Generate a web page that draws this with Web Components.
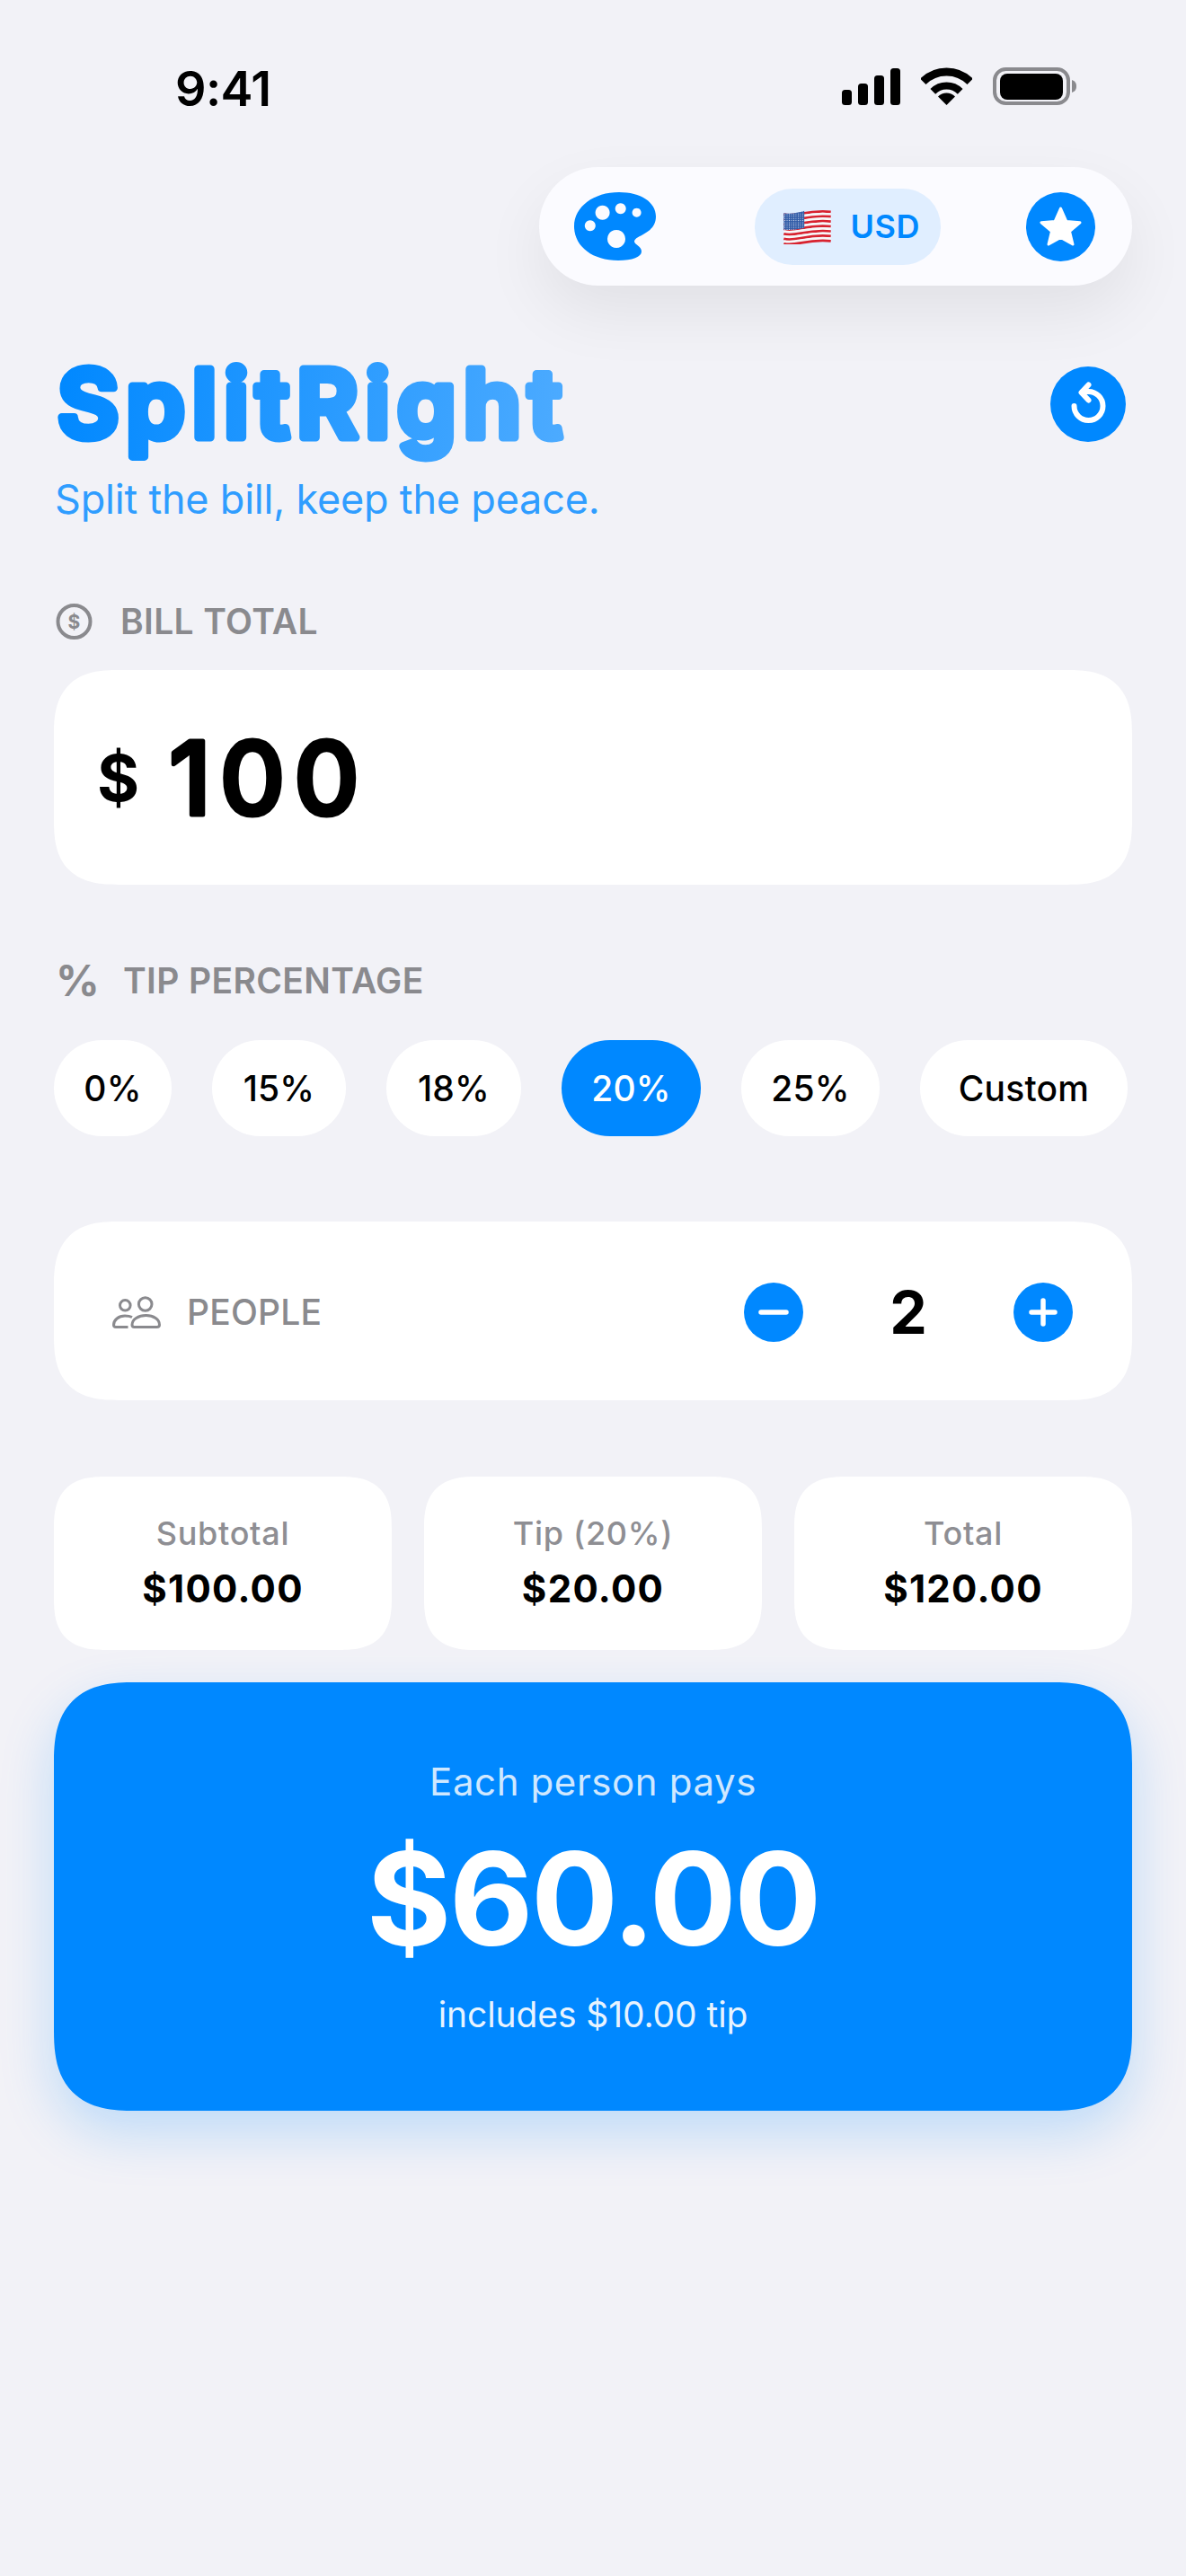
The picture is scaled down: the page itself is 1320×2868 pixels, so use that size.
<!DOCTYPE html>
<html lang="en">
<head>
<meta charset="utf-8">
<title>SplitRight</title>
<style>
    html, body { margin: 0; background: #f2f2f7; }
    body { font-family: Inter, "Liberation Sans", sans-serif; }
</style>
</head>
<body>
<split-app></split-app>
<script>
// small helper so each element only has to declare its html
function shadow(el, html) {
    el.attachShadow({ mode: 'open' });
    el.shadowRoot.innerHTML = html;
}

class StatusBar extends HTMLElement {
    connectedCallback() {
        shadow(this, `
            <style>
                :host { display: flex; justify-content: space-between; align-items: flex-start; box-sizing: border-box; height: 186px; padding: 75px 122px 0 195px; color: #000; }
                .row { display: flex; align-items: center; }
                .time { font: 600 54px/54px Inter, sans-serif; letter-spacing: -0.6px; margin-top: -3px; }
                svg { display: block; }
                .wifi { margin-left: 23px; }
                .batt { margin-left: 23px; }
            </style>
            <div class="time">9:41</div>
            <div class="row">
                <svg width="65" height="41" viewBox="0 0 65 41">
                    <rect x="0" y="24" width="11" height="17" rx="3.5"/>
                    <rect x="18" y="17" width="11" height="24" rx="3.5"/>
                    <rect x="36" y="8" width="11" height="33" rx="3.5"/>
                    <rect x="54" y="0" width="11" height="41" rx="3.5"/>
                </svg>
                <svg class="wifi" width="57" height="42" viewBox="0 0 57 42" fill="none" stroke="#000">
                    <path d="M2.3 15.8A37 37 0 0 1 54.7 15.8" stroke-width="9"/>
                    <path d="M13.3 26.8A21.5 21.5 0 0 1 43.7 26.8" stroke-width="8"/>
                    <path d="M28.5 42L19 32.5A13.5 13.5 0 0 1 38 32.5Z" fill="#000" stroke="none"/>
                </svg>
                <svg class="batt" width="93" height="42" viewBox="0 0 93 42">
                    <rect x="2" y="2" width="82" height="38" rx="12.5" fill="none" stroke="#8a8a8e" stroke-width="4"/>
                    <rect x="8" y="7" width="70" height="29" rx="8"/>
                    <path d="M88 14C91 15 93 17 93 21C93 25 91 27 88 28Z" fill="#8a8a8e"/>
                </svg>
            </div>
        `);
    }
}

class ToolPill extends HTMLElement {
    connectedCallback() {
        let stripes = '';
        for (let i = 0; i < 13; i++) {
            const y = 6 + i * 2.85;
            stripes += `<path d="M0 ${y + 1}C14 ${y + 5} 26 ${y - 5} 55 ${y - 2}" stroke="${i % 2 ? '#f7f7f8' : '#d8222f'}" stroke-width="2.95" fill="none"/>`;
        }
        shadow(this, `
            <style>
                :host { display: flex; align-items: center; box-sizing: border-box; width: 660px; height: 132px; margin-left: 540px; padding: 0 41px 0 39px; background: #fbfbff; border-radius: 66px; box-shadow: 0 30px 70px rgba(0, 0, 0, 0.07); justify-content: space-between; }
                svg { display: block; flex: none; }
                .chip { display: flex; align-items: center; gap: 21px; box-sizing: border-box; width: 207px; height: 85px; padding-left: 31px; margin-left: 14px; background: #e0eeff; border-radius: 42px; color: #0088ff; font: 600 36px/36px Inter, sans-serif; letter-spacing: 0.6px; }
            </style>
            <svg width="91" height="76" viewBox="0 0 91 76">
                <path fill="#0088ff" fill-rule="evenodd" d="M50 0C74 0 91 11 91 27C91 38 84 43 76 47.5C71 50 67 52 67 55C67 58 75 60 75 66C75 72 65 76 49 76C20 76 0 60 0 38C0 16 22 0 50 0Z
                    M31.6 14.7a8 8 0 1 0 .01 0Z M51.7 12.3a6 6 0 1 0 .01 0Z M69.6 17.7a5 5 0 1 0 .01 0Z M17.8 31.3a6 6 0 1 0 .01 0Z M47 42a10 10 0 1 0 .01 0Z"/>
            </svg>
            <div class="chip">
                <svg width="55" height="40" viewBox="0 0 55 42">
                    <defs>
                        <pattern id="dots" width="2.6" height="2.6" patternUnits="userSpaceOnUse">
                            <circle cx="1.3" cy="1.3" r="0.6" fill="#dfe6f5"/>
                        </pattern>
                    </defs>
                    ${stripes}
                    <path d="M0 5.5C8 7 16 5.5 24 3V23C16 24.5 8 25.5 0 25Z" fill="#2f5aa6"/>
                    <path d="M0 5.5C8 7 16 5.5 24 3V23C16 24.5 8 25.5 0 25Z" fill="url(#dots)"/>
                </svg>
                <span>USD</span>
            </div>
            <svg width="77" height="77" viewBox="0 0 77 77">
                <circle cx="38.5" cy="38.5" r="38.5" fill="#0088ff"/>
                <path d="M38.5 18L44.8 32.4L60 33.8L48.5 43.6L52 58L38.5 50.5L25 58L28.5 43.6L17 33.8L32.2 32.4Z" fill="#fff" stroke="#fff" stroke-width="3" stroke-linejoin="round"/>
            </svg>
        `);
    }
}

class AppHeader extends HTMLElement {
    connectedCallback() {
        shadow(this, `
            <style>
                :host { display: flex; justify-content: space-between; align-items: flex-start; padding-top: 80px; }
                svg { display: block; overflow: visible; }
                .sub { font: 400 45px/54px Inter, sans-serif; color: #2f9dff; letter-spacing: -0.2px; margin-left: 1px; }
                .reset { margin: 10px 7px 0 0; flex: none; }
                text { font-family: Inter, sans-serif; font-weight: 600; font-size: 105px; }
            </style>
            <div>
                <svg width="600" height="131" viewBox="0 0 600 131">
                    <defs>
                        <linearGradient id="title" gradientUnits="userSpaceOnUse" x1="0" y1="20" x2="570" y2="110">
                            <stop offset="0" stop-color="#0088ff"/>
                            <stop offset="1" stop-color="#4dabff"/>
                        </linearGradient>
                    </defs>
                    <text x="4" y="88.5" textLength="561" lengthAdjust="spacing" fill="url(#title)" stroke="url(#title)" stroke-width="9" stroke-linejoin="round">SplitRight</text>
                </svg>
                <div class="sub">Split the bill, keep the peace.</div>
            </div>
            <svg class="reset" width="84" height="84" viewBox="0 0 84 84">
                <circle cx="42" cy="42" r="42" fill="#0088ff"/>
                <g fill="none" stroke="#fff" stroke-width="6" stroke-linecap="round" stroke-linejoin="round">
                    <path d="M26.5 44A16 16 0 1 0 42.5 28H36"/>
                    <path d="M42.5 20.5L34.5 29L42.5 37.5"/>
                </g>
            </svg>
        `);
    }
}

class FieldLabel extends HTMLElement {
    connectedCallback() {
        shadow(this, `
            <style>
                :host { display: flex; align-items: center; height: 40px; color: #8a8a8e; font: 600 39px/40px Inter, sans-serif; letter-spacing: 0.35px; }
                .icon { display: flex; width: var(--icon-w, 72px); flex: none; margin-left: var(--icon-x, 2px); }
            </style>
            <div class="icon"><slot name="icon"></slot></div>
            <slot></slot>
        `);
    }
}

class BillCard extends HTMLElement {
    connectedCallback() {
        shadow(this, `
            <style>
                :host { display: flex; align-items: center; box-sizing: border-box; height: 239px; padding-left: 48px; background: #fff; border-radius: 60px; color: #000; }
                @supports (corner-shape: squircle) {
                    :host { border-radius: 72px; corner-shape: superellipse(1.4); }
                }
                .cur { font: 700 72px/80px Inter, sans-serif; margin-right: 28px; }
                svg { display: block; overflow: visible; }
                text { font-family: Inter, sans-serif; font-weight: 500; font-size: 113px; }
            </style>
            <span class="cur">${this.getAttribute('currency')}</span>
            <svg width="215" height="130" viewBox="0 0 215 130">
                <text x="5" y="105.5" textLength="212" lengthAdjust="spacing" fill="#000" stroke="#000" stroke-width="5" stroke-linejoin="round">${this.getAttribute('amount')}</text>
            </svg>
        `);
    }
}

class TipChips extends HTMLElement {
    connectedCallback() {
        shadow(this, `
            <style>
                :host { display: flex; gap: 45px; }
            </style>
            <slot></slot>
        `);
    }
}

class TipChip extends HTMLElement {
    connectedCallback() {
        const on = this.hasAttribute('selected');
        shadow(this, `
            <style>
                :host { display: flex; align-items: center; justify-content: center; box-sizing: border-box; height: 107px; width: ${this.getAttribute('w')}px; border-radius: 54px; background: ${on ? '#0088ff' : '#fff'}; color: ${on ? '#fff' : '#000'}; font: 550 39px/40px Inter, sans-serif; letter-spacing: 0.2px; }
            </style>
            <slot></slot>
        `);
    }
}

class PeopleCard extends HTMLElement {
    connectedCallback() {
        shadow(this, `
            <style>
                :host { display: flex; align-items: center; box-sizing: border-box; height: 199px; padding: 2px 66px 0 65px; background: #fff; border-radius: 60px; }
                @supports (corner-shape: squircle) {
                    :host { border-radius: 72px; corner-shape: superellipse(1.4); }
                }
                svg { display: block; flex: none; }
                .label { font: 500 39px/40px Inter, sans-serif; color: #8a8a8e; margin-left: 29px; flex: 1; letter-spacing: 0.2px; }
                .count { width: 234px; text-align: center; font: 700 66px/70px Inter, sans-serif; color: #000; }
            </style>
            <svg width="54" height="36" viewBox="0 0 54 36" fill="none" stroke="#8a8a8e" stroke-width="3">
                <circle cx="36.7" cy="9" r="7.3"/>
                <circle cx="14.3" cy="10.3" r="5.8"/>
                <path d="M24.5 34.5H49.5C51.5 34.5 52.5 33.5 52.5 32C52.5 26 46 21.5 37.5 21.5C29 21.5 22 26 22 32C22 33.5 23 34.5 24.5 34.5Z"/>
                <path d="M17.5 34.5H4C2.5 34.5 1.5 33.8 1.5 32.3C1.5 26.5 7 22 14 22C17 22 20 22.5 22 23.5"/>
            </svg>
            <div class="label"><slot></slot></div>
            <svg width="66" height="66" viewBox="0 0 66 66">
                <circle cx="33" cy="33" r="33" fill="#0088ff"/>
                <path d="M19 33H47" stroke="#fff" stroke-width="5.5" stroke-linecap="round"/>
            </svg>
            <div class="count"><slot name="count"></slot></div>
            <svg width="66" height="66" viewBox="0 0 66 66">
                <circle cx="33" cy="33" r="33" fill="#0088ff"/>
                <path d="M20 33H46M33 20V46" stroke="#fff" stroke-width="5.5" stroke-linecap="round"/>
            </svg>
        `);
    }
}

class StatCard extends HTMLElement {
    connectedCallback() {
        shadow(this, `
            <style>
                :host { display: flex; flex-direction: column; align-items: center; box-sizing: border-box; height: 193px; padding-top: 41px; background: #fff; border-radius: 48px; }
                @supports (corner-shape: squircle) {
                    :host { border-radius: 58px; corner-shape: superellipse(1.4); }
                }
                .k { font: 500 36px/44px Inter, sans-serif; color: #8e8e93; letter-spacing: 0.7px; }
                .v { font: 700 42px/50px Inter, sans-serif; color: #000; margin-top: 15px; letter-spacing: 1.3px; }
            </style>
            <div class="k"><slot name="label"></slot></div>
            <div class="v"><slot></slot></div>
        `);
    }
}

class PayCard extends HTMLElement {
    connectedCallback() {
        shadow(this, `
            <style>
                :host { display: flex; flex-direction: column; align-items: center; box-sizing: border-box; height: 477px; padding-top: 86px; background: #0088ff; border-radius: 75px; color: #fff; box-shadow: 0 24px 60px rgba(0, 136, 255, 0.22); }
                @supports (corner-shape: squircle) {
                    :host { border-radius: 90px; corner-shape: superellipse(1.4); }
                }
                .a { font: 400 42px/50px Inter, sans-serif; color: rgba(255, 255, 255, 0.82); letter-spacing: 0.6px; }
                .b { font: 700 144px/170px Inter, sans-serif; margin-top: 20px; letter-spacing: -2.5px; }
                .c { font: 400 39px/48px Inter, sans-serif; color: rgba(255, 255, 255, 0.92); margin-top: 20px; letter-spacing: -0.1px; }
            </style>
            <div class="a"><slot name="caption"></slot></div>
            <div class="b"><slot></slot></div>
            <div class="c"><slot name="note"></slot></div>
        `);
    }
}

class SplitApp extends HTMLElement {
    connectedCallback() {
        shadow(this, `
            <style>
                :host { display: block; box-sizing: border-box; width: 1320px; height: 2868px; padding: 0 60px; background: #f2f2f7; overflow: hidden; }
                status-bar { margin: 0 -60px; }
                .bill-label { margin-top: 89px; }
                bill-card { margin-top: 34px; }
                .tip-label { margin-top: 87px; --icon-x: 2px; --icon-w: 75px; }
                tip-chips { margin-top: 46px; }
                people-card { margin-top: 95px; }
                .stats { display: grid; grid-template-columns: repeat(3, 1fr); gap: 36px; margin-top: 85px; }
                pay-card { margin-top: 36px; }
                .pct { font: 650 48px/40px Inter, sans-serif; }
            </style>
            <status-bar></status-bar>
            <tool-pill></tool-pill>
            <app-header></app-header>

            <field-label class="bill-label">
                <svg slot="icon" width="41" height="40" viewBox="0 0 41 40">
                    <circle cx="20.5" cy="20" r="18" fill="none" stroke="#8a8a8e" stroke-width="4"/>
                    <text x="20.5" y="27.5" text-anchor="middle" font-family="Inter, sans-serif" font-weight="700" font-size="21" fill="#8a8a8e">$</text>
                </svg>
                BILL TOTAL
            </field-label>
            <bill-card currency="$" amount="100"></bill-card>

            <field-label class="tip-label">
                <span slot="icon" class="pct">%</span>
                TIP PERCENTAGE
            </field-label>
            <tip-chips>
                <tip-chip w="131">0%</tip-chip>
                <tip-chip w="149">15%</tip-chip>
                <tip-chip w="150">18%</tip-chip>
                <tip-chip w="155" selected>20%</tip-chip>
                <tip-chip w="154">25%</tip-chip>
                <tip-chip w="231">Custom</tip-chip>
            </tip-chips>

            <people-card>PEOPLE<span slot="count">2</span></people-card>

            <div class="stats">
                <stat-card><span slot="label">Subtotal</span>$100.00</stat-card>
                <stat-card><span slot="label">Tip (20%)</span>$20.00</stat-card>
                <stat-card><span slot="label">Total</span>$120.00</stat-card>
            </div>

            <pay-card>
                <span slot="caption">Each person pays</span>
                $60.00
                <span slot="note">includes $10.00 tip</span>
            </pay-card>
        `);
    }
}

customElements.define('status-bar', StatusBar);
customElements.define('tool-pill', ToolPill);
customElements.define('app-header', AppHeader);
customElements.define('field-label', FieldLabel);
customElements.define('bill-card', BillCard);
customElements.define('tip-chips', TipChips);
customElements.define('tip-chip', TipChip);
customElements.define('people-card', PeopleCard);
customElements.define('stat-card', StatCard);
customElements.define('pay-card', PayCard);
customElements.define('split-app', SplitApp);
</script>
</body>
</html>
